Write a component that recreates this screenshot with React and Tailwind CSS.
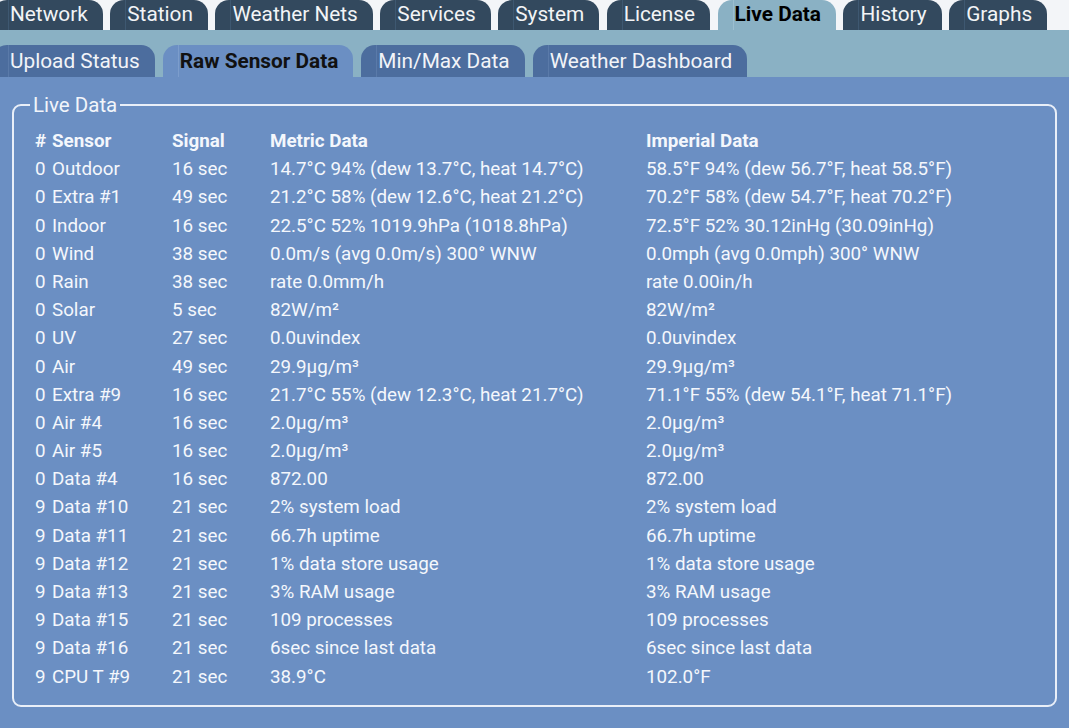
import React from 'react';

const mainTabs = ["Network", "Station", "Weather Nets", "Services", "System", "License", "Live Data", "History", "Graphs"];
const subTabs = ["Upload Status", "Raw Sensor Data", "Min/Max Data", "Weather Dashboard"];

const rows = [
  ["0", "Outdoor", "16 sec", "14.7°C 94% (dew 13.7°C, heat 14.7°C)", "58.5°F 94% (dew 56.7°F, heat 58.5°F)"],
  ["0", "Extra #1", "49 sec", "21.2°C 58% (dew 12.6°C, heat 21.2°C)", "70.2°F 58% (dew 54.7°F, heat 70.2°F)"],
  ["0", "Indoor", "16 sec", "22.5°C 52% 1019.9hPa (1018.8hPa)", "72.5°F 52% 30.12inHg (30.09inHg)"],
  ["0", "Wind", "38 sec", "0.0m/s (avg 0.0m/s) 300° WNW", "0.0mph (avg 0.0mph) 300° WNW"],
  ["0", "Rain", "38 sec", "rate 0.0mm/h", "rate 0.00in/h"],
  ["0", "Solar", "5 sec", "82W/m²", "82W/m²"],
  ["0", "UV", "27 sec", "0.0uvindex", "0.0uvindex"],
  ["0", "Air", "49 sec", "29.9µg/m³", "29.9µg/m³"],
  ["0", "Extra #9", "16 sec", "21.7°C 55% (dew 12.3°C, heat 21.7°C)", "71.1°F 55% (dew 54.1°F, heat 71.1°F)"],
  ["0", "Air #4", "16 sec", "2.0µg/m³", "2.0µg/m³"],
  ["0", "Air #5", "16 sec", "2.0µg/m³", "2.0µg/m³"],
  ["0", "Data #4", "16 sec", "872.00", "872.00"],
  ["9", "Data #10", "21 sec", "2% system load", "2% system load"],
  ["9", "Data #11", "21 sec", "66.7h uptime", "66.7h uptime"],
  ["9", "Data #12", "21 sec", "1% data store usage", "1% data store usage"],
  ["9", "Data #13", "21 sec", "3% RAM usage", "3% RAM usage"],
  ["9", "Data #15", "21 sec", "109 processes", "109 processes"],
  ["9", "Data #16", "21 sec", "6sec since last data", "6sec since last data"],
  ["9", "CPU T #9", "21 sec", "38.9°C", "102.0°F"],
];

export default function App() {
  return (
    <div className="w-[1069px] h-[728px] overflow-hidden bg-[#6b8fc3] font-['Roboto',sans-serif] flex flex-col">
      {/* main tabs */}
      <div className="bg-[#f3f5f8] h-[30px] flex gap-[7.5px] -ml-[7px] shrink-0">
        {mainTabs.map((t) => {
          const active = t === "Live Data";
          return (
            <div
              key={t}
              className={`h-[30px] rounded-t-[14px] pl-[15px] pr-[15px] flex items-stretch ${active ? "bg-[#8ab1c4]" : "bg-[#33495e]"}`}
            >
              <span
                className={`text-[20.8px] leading-[28px] pl-[1px] border-l ${active ? "text-black font-bold border-[#9cbecf]" : "text-[#f2f4f6] border-[#3e5871]"}`}
              >
                {t}
              </span>
            </div>
          );
        })}
      </div>

      {/* sub tabs */}
      <div className="bg-[#8ab1c4] h-[47px] flex items-end gap-[8px] -ml-[7px] shrink-0">
        {subTabs.map((t) => {
          const active = t === "Raw Sensor Data";
          return (
            <div
              key={t}
              className={`h-[32px] rounded-t-[14px] pl-[15px] pr-[15px] flex items-stretch ${active ? "bg-[#6b8fc3]" : "bg-[#4c6d9e]"}`}
            >
              <span
                className={`text-[20.8px] leading-[32px] pl-[1px] border-l ${active ? "text-[#111] font-bold border-[#7c9dcc]" : "text-[#f2f4f8] border-[#5a7aa9]"}`}
              >
                {t}
              </span>
            </div>
          );
        })}
      </div>

      {/* content */}
      <div className="px-[12px] pt-[17px]">
        <fieldset className="border-2 border-[#e9eff8] rounded-[9px] h-[613px] pl-[21px] pr-[12px]">
          <legend className="-ml-[5px] px-[3px] text-[20.5px] leading-[22px] text-[#f2f5fa]">Live Data</legend>
          <table className="text-[18.8px] text-[#f4f7fc] border-collapse mt-[11px]">
            <thead>
              <tr className="h-[28px]">
                <th className="w-[17px] text-left font-bold p-0">#</th>
                <th className="w-[120px] text-left font-bold p-0">Sensor</th>
                <th className="w-[98px] text-left font-bold p-0">Signal</th>
                <th className="w-[376px] text-left font-bold p-0">Metric Data</th>
                <th className="text-left font-bold p-0">Imperial Data</th>
              </tr>
            </thead>
            <tbody>
              {rows.map((r, i) => (
                <tr key={i} className="h-[28.2px]">
                  {r.map((c, j) => (
                    <td key={j} className="p-0 whitespace-nowrap">{c}</td>
                  ))}
                </tr>
              ))}
            </tbody>
          </table>
        </fieldset>
      </div>
    </div>
  );
}
